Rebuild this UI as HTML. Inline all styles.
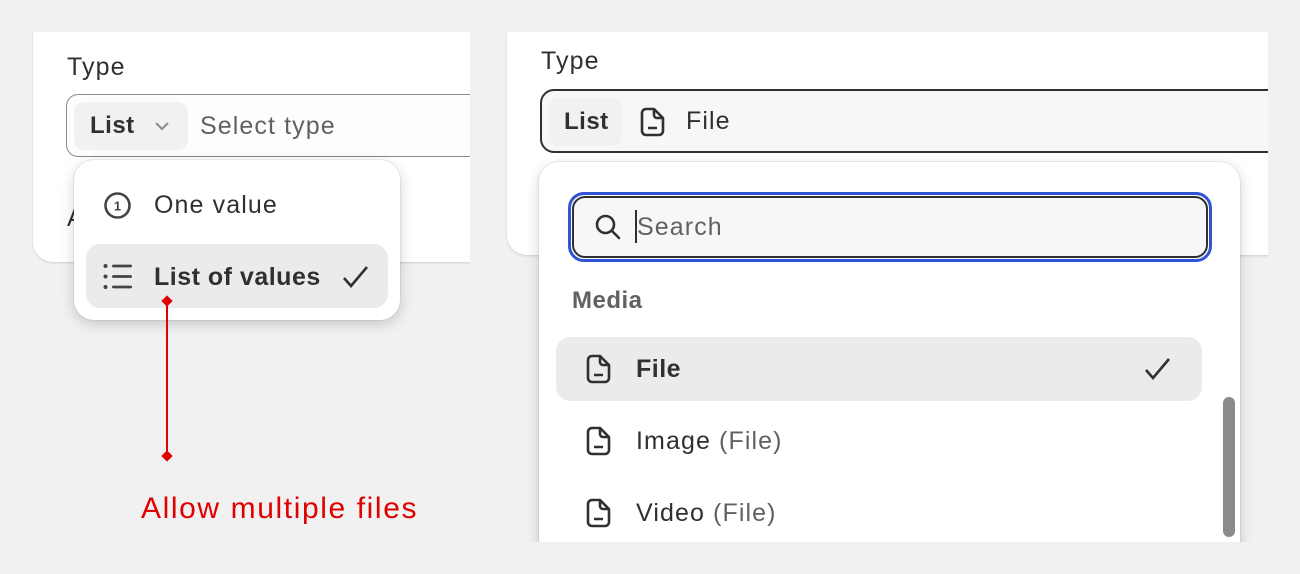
<!DOCTYPE html>
<html><head><style>
*{box-sizing:border-box;margin:0;padding:0}
body{width:1300px;height:574px;background:#f1f1f1;position:relative;overflow:hidden;font-family:"Liberation Sans",sans-serif;color:#303030}
.abs{position:absolute}
.card{background:#fff;box-shadow:0 1px 2px rgba(0,0,0,.15)}
.t{font-size:25px;letter-spacing:1.1px;white-space:nowrap}
.b{font-weight:bold;letter-spacing:.5px}
.chip{background:#f1f1f1;border-radius:10px;font-weight:bold;font-size:24px;letter-spacing:.5px;display:flex;align-items:center}
.dd{background:#fff;border-radius:20px;box-shadow:0 4px 14px rgba(0,0,0,.18),0 0 0 1px rgba(0,0,0,.05)}
</style></head><body>
<!-- left -->
<div class="abs card" style="left:33px;top:32px;width:437px;height:230px;border-radius:0 0 0 20px"></div>
<div class="abs t" style="left:67px;top:53px">Type</div>
<div class="abs t" style="left:67px;top:204px">A</div>
<div class="abs" style="left:66px;top:94px;width:420px;height:63px;border:1px solid #8a8a8a;border-right:none;border-radius:12px 0 0 12px;background:#fdfdfd"></div>
<div class="abs" style="left:470px;top:30px;width:40px;height:240px;background:#f1f1f1"></div>
<div class="abs chip" style="left:74px;top:102px;width:114px;height:48px;padding-left:16px">List
<svg width="22" height="22" viewBox="0 0 22 22" style="margin-left:16px"><path d="M5 8l6 6 6-6" fill="none" stroke="#8a8a8a" stroke-width="2"/></svg></div>
<div class="abs t" style="left:200px;top:112px;color:#616161">Select type</div>
<div class="abs dd" style="left:74px;top:160px;width:326px;height:160px"></div>
<svg class="abs" style="left:103px;top:191px" width="29" height="29" viewBox="0 0 29 29"><circle cx="14.5" cy="14.5" r="12" fill="none" stroke="#444" stroke-width="2.6"/><text x="14.5" y="19.5" font-size="13" font-weight="bold" text-anchor="middle" fill="#444" font-family="Liberation Sans">1</text></svg>
<div class="abs t" style="left:154px;top:191px">One value</div>
<div class="abs" style="left:86px;top:244px;width:302px;height:64px;background:#ebebeb;border-radius:14px"></div>
<svg class="abs" style="left:103px;top:263px" width="30" height="28" viewBox="0 0 30 28"><g fill="#444"><circle cx="2.5" cy="3" r="2"/><circle cx="2.5" cy="13.5" r="2"/><circle cx="2.5" cy="24" r="2"/><rect x="9" y="1.6" width="20" height="2.8" rx="1.4"/><rect x="9" y="12.1" width="20" height="2.8" rx="1.4"/><rect x="9" y="22.6" width="20" height="2.8" rx="1.4"/></g></svg>
<div class="abs t b" style="left:154px;top:263px">List of values</div>
<svg class="abs" style="left:342px;top:263px" width="28" height="28" viewBox="0 0 28 28"><path d="M2 15l7 8L25 4" fill="none" stroke="#303030" stroke-width="2.6"/></svg>
<div class="abs" style="left:166px;top:300px;width:2px;height:156px;background:#e00000"></div>
<div class="abs" style="left:163px;top:297px;width:8px;height:8px;background:#e00000;transform:rotate(45deg)"></div>
<div class="abs" style="left:163px;top:452px;width:8px;height:8px;background:#e00000;transform:rotate(45deg)"></div>
<div class="abs" style="left:141px;top:492px;font-size:30px;letter-spacing:1.6px;color:#e00000;white-space:nowrap">Allow multiple files</div>
<!-- right -->
<div class="abs" style="left:480px;top:0;width:820px;height:542px;overflow:hidden">
<div class="abs card" style="left:27px;top:32px;width:780px;height:223px;border-radius:0 0 0 20px"></div>
<div class="abs t" style="left:61px;top:47px">Type</div>
<div class="abs" style="left:60px;top:89px;width:760px;height:64px;border:2px solid #303030;border-radius:14px;background:#f7f7f7"></div>
<div class="abs chip" style="left:68px;top:98px;width:74px;height:48px;padding-left:16px">List</div>
<svg class="abs" style="left:160px;top:107px" width="26" height="30" viewBox="0 0 26 30"><path d="M6 2h8l9 9v13a4 4 0 0 1-4 4H6a4 4 0 0 1-4-4V6a4 4 0 0 1 4-4z M14 2v6a3 3 0 0 0 3 3h6 M8 21h9" fill="none" stroke="#303030" stroke-width="2.6" stroke-linejoin="round"/></svg>
<div class="abs t" style="left:206px;top:107px">File</div>
<div class="abs dd" style="left:59px;top:162px;width:701px;height:420px"></div>
<div class="abs" style="left:88px;top:192px;width:644px;height:70px;border:3px solid #2f54d4;border-radius:16px"></div>
<div class="abs" style="left:92px;top:196px;width:636px;height:62px;border:2px solid #303030;border-radius:13px;background:#f7f7f7"></div>
<svg class="abs" style="left:114px;top:213px" width="28" height="28" viewBox="0 0 28 28"><circle cx="11.5" cy="11.5" r="8.5" fill="none" stroke="#303030" stroke-width="2.6"/><path d="M18 18l7 7" stroke="#303030" stroke-width="2.6" stroke-linecap="round"/></svg>
<div class="abs" style="left:155px;top:210px;width:2px;height:33px;background:#303030"></div>
<div class="abs t" style="left:157px;top:213px;color:#616161">Search</div>
<div class="abs" style="left:92px;top:287px;font-size:24px;letter-spacing:.5px;font-weight:bold;color:#616161">Media</div>
<div class="abs" style="left:76px;top:337px;width:646px;height:64px;background:#ebebeb;border-radius:14px"></div>
<svg class="abs" style="left:106px;top:354px" width="26" height="30" viewBox="0 0 26 30"><path d="M6 2h8l9 9v13a4 4 0 0 1-4 4H6a4 4 0 0 1-4-4V6a4 4 0 0 1 4-4z M14 2v6a3 3 0 0 0 3 3h6 M8 21h9" fill="none" stroke="#303030" stroke-width="2.6" stroke-linejoin="round"/></svg>
<div class="abs t b" style="left:156px;top:355px">File</div>
<svg class="abs" style="left:664px;top:355px" width="28" height="28" viewBox="0 0 28 28"><path d="M2 15l7 8L25 4" fill="none" stroke="#303030" stroke-width="2.6"/></svg>
<svg class="abs" style="left:106px;top:426px" width="26" height="30" viewBox="0 0 26 30"><path d="M6 2h8l9 9v13a4 4 0 0 1-4 4H6a4 4 0 0 1-4-4V6a4 4 0 0 1 4-4z M14 2v6a3 3 0 0 0 3 3h6 M8 21h9" fill="none" stroke="#303030" stroke-width="2.6" stroke-linejoin="round"/></svg>
<div class="abs t" style="left:156px;top:427px">Image <span style="color:#616161">(File)</span></div>
<svg class="abs" style="left:106px;top:498px" width="26" height="30" viewBox="0 0 26 30"><path d="M6 2h8l9 9v13a4 4 0 0 1-4 4H6a4 4 0 0 1-4-4V6a4 4 0 0 1 4-4z M14 2v6a3 3 0 0 0 3 3h6 M8 21h9" fill="none" stroke="#303030" stroke-width="2.6" stroke-linejoin="round"/></svg>
<div class="abs t" style="left:156px;top:499px">Video <span style="color:#616161">(File)</span></div>
<div class="abs" style="left:743px;top:397px;width:12px;height:140px;background:#8a8a8a;border-radius:6px"></div>
<div class="abs" style="left:788px;top:0;width:40px;height:542px;background:#f1f1f1"></div>
</div>
</body></html>
